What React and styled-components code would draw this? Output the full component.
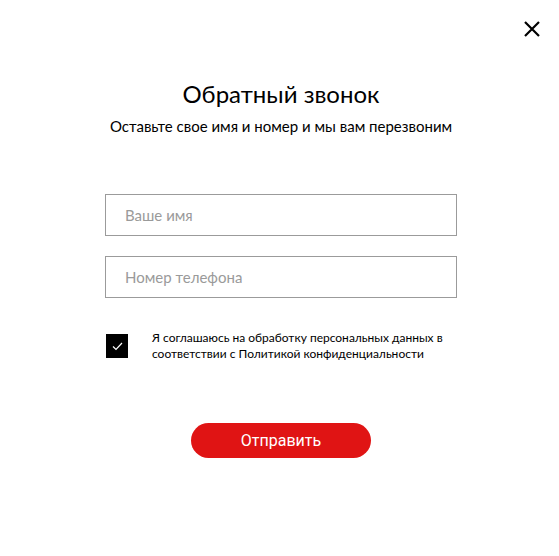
import React, { useState } from 'react';
import styled, { createGlobalStyle } from 'styled-components';

const Global = createGlobalStyle`
  html, body {
    margin: 0;
    padding: 0;
    background: #fff;
  }
  body {
    font-family: Lato, "Open Sans", sans-serif;
    color: #000;
  }
`;

const Modal = styled.div`
  position: relative;
  width: 559px;
  height: 556px;
  box-sizing: border-box;
  padding: 78px 0 0 3px;
  display: flex;
  flex-direction: column;
  align-items: center;
`;

const Close = styled.button`
  position: absolute;
  top: 20px;
  right: 18px;
  width: 18px;
  height: 18px;
  padding: 0;
  border: 0;
  background: none;
  cursor: pointer;

  svg {
    display: block;
  }
`;

const Title = styled.h2`
  margin: 0;
  font-size: 24px;
  font-weight: 400;
  line-height: 32px;
  text-align: center;
`;

const Subtitle = styled.p`
  margin: 6px 0 0;
  font-size: 15px;
  line-height: 20px;
  text-align: center;
`;

const Form = styled.form`
  width: 352px;
  margin-top: 58px;
  display: flex;
  flex-direction: column;
`;

const Input = styled.input`
  box-sizing: border-box;
  width: 100%;
  height: 42px;
  margin-bottom: 20px;
  padding: 0 19px;
  border: 1px solid #9b9b9b;
  border-radius: 0;
  outline: none;
  font-family: Lato, "Open Sans", sans-serif;
  font-size: 15px;
  color: #333;

  &::placeholder {
    color: #9a9a9a;
  }
`;

const Agree = styled.label`
  display: flex;
  align-items: center;
  gap: 24px;
  margin-top: 12px;
  padding-left: 1px;
  font-size: 12px;
  line-height: 16px;
  cursor: pointer;
`;

const Box = styled.span`
  flex: none;
  width: 22px;
  height: 24px;
  background: ${(p) => (p.checked ? '#000' : '#fff')};
  border: 1px solid #000;
  box-sizing: border-box;
  display: flex;
  align-items: center;
  justify-content: center;
`;

const Submit = styled.button`
  align-self: center;
  margin-top: 61px;
  width: 180px;
  height: 35px;
  border: 0;
  border-radius: 18px;
  background: #e01414;
  color: #fff;
  font-family: Roboto, sans-serif;
  font-size: 16px;
  cursor: pointer;
`;

export default function App() {
  const [checked, setChecked] = useState(true);

  return (
    <>
      <Global />
      <Modal>
        <Close aria-label="Закрыть">
          <svg width="18" height="18" viewBox="0 0 18 18">
            <path d="M2 2L16 16M16 2L2 16" stroke="#000" strokeWidth="2.2" />
          </svg>
        </Close>
        <Title>Обратный звонок</Title>
        <Subtitle>Оставьте свое имя и номер и мы вам перезвоним</Subtitle>
        <Form onSubmit={(e) => e.preventDefault()}>
          <Input placeholder="Ваше имя" />
          <Input placeholder="Номер телефона" />
          <Agree onClick={() => setChecked(!checked)}>
            <Box checked={checked}>
              {checked && (
                <svg width="11" height="9" viewBox="0 0 11 9">
                  <path d="M1 4.5L4 7.5L10 1" fill="none" stroke="#fff" strokeWidth="1.2" />
                </svg>
              )}
            </Box>
            <span>
              Я соглашаюсь на обработку персональных данных в соответствии с Политикой конфиденциальности
            </span>
          </Agree>
          <Submit type="submit">Отправить</Submit>
        </Form>
      </Modal>
    </>
  );
}
